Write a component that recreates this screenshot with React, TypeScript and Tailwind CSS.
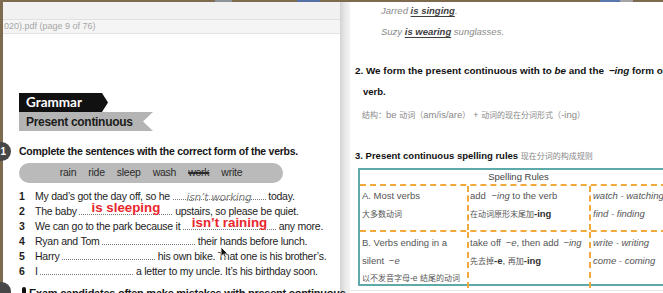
import type { ReactNode } from 'react';

const sans = "font-['Liberation_Sans',Arial,sans-serif]";
const cjk = "font-['Liberation_Sans','Noto_Sans_CJK_SC',sans-serif]";

type Tone = 'red' | 'pencil';

interface Sentence {
  n: number;
  before: string;
  answer?: string;
  tone?: Tone;
  after: string;
}

const sentences: Sentence[] = [
  { n: 1, before: 'My dad’s got the day off, so he', answer: 'isn’t working', tone: 'pencil', after: 'today.' },
  { n: 2, before: 'The baby', answer: 'is sleeping', tone: 'red', after: 'upstairs, so please be quiet.' },
  { n: 3, before: 'We can go to the park because it', answer: 'isn’t raining', tone: 'red', after: 'any more.' },
  { n: 4, before: 'Ryan and Tom', after: 'their hands before lunch.' },
  { n: 5, before: 'Harry', after: 'his own bike. That one is his brother’s.' },
  { n: 6, before: 'I', after: 'a letter to my uncle. It’s his birthday soon.' },
];

const verbs = ['rain', 'ride', 'sleep', 'wash', 'work', 'write'];

function Blank({ answer, tone }: { answer?: string; tone?: Tone }) {
  return (
    <span className="relative inline-block w-[93px] border-b border-dotted border-[#7a7a7a]">
      {answer && tone === 'red' && (
        <span className="absolute inset-x-0 bottom-0 text-center text-[13.3px] font-bold leading-none tracking-normal text-[#e8262b]">
          {answer}
        </span>
      )}
      {answer && tone === 'pencil' && (
        <span className="absolute inset-x-0 bottom-[-3px] text-center font-['DejaVu_Sans',sans-serif] text-[10.5px] font-light italic leading-none tracking-[-0.2px] text-[#7d7d7d]">
          {answer}
        </span>
      )}
    </span>
  );
}

function Zh({ children, className = '' }: { children: ReactNode; className?: string }) {
  return <span className={`${cjk} text-[8px] ${className}`}>{children}</span>;
}

function DesktopStrip() {
  return (
    <div className="flex h-[2px] w-full shrink-0">
      <div className="w-[215px] bg-[#7e6b4f]" />
      <div className="w-[17px] bg-[#8d939b]" />
      <div className="w-[65px] bg-[#7e6b4f]" />
      <div className="w-[23px] bg-[#5470a5]" />
      <div className="w-[280px] bg-[#7e6b4f]" />
      <div className="w-[20px] bg-[#5a78b0]" />
      <div className="w-[13px] bg-[#a3a3a3]" />
      <div className="flex-1 bg-[#7e6b4f]" />
    </div>
  );
}

function Cursor() {
  return (
    <svg className="absolute left-[217px] top-[212px]" width="9" height="13" viewBox="0 0 9 13">
      <path d="M1 1 L1 10.5 L3.3 8.4 L5 12 L6.4 11.4 L4.8 7.9 L7.9 7.9 Z" fill="#111" stroke="#fff" strokeWidth="0.8" />
    </svg>
  );
}

function PdfWindow() {
  return (
    <div className={`flex w-[337px] flex-col bg-white ${sans}`}>
      <div className="h-[18px] shrink-0 border-b border-[#e1e1e1] bg-[#f1f1f1]" />
      <div className="flex h-[14px] shrink-0 items-center border-b border-[#e4e4e4] bg-[#f5f5f5] pl-[1px] text-[9px] text-[#a6a6a6]">
        020).pdf (page 9 of 76)
      </div>

      <div className="relative flex-1 pl-[16px] pt-[59px]">
        {/* exercise badges, cut by the window edge */}
        <div className="absolute left-[-11px] top-[108px] flex h-[19px] w-[19px] items-center justify-end rounded-full bg-[#474747] pr-[5px] text-[10px] font-bold text-white">
          1
        </div>
        <div className="absolute left-[-11px] top-[248px] h-[19px] w-[19px] rounded-full bg-[#474747]" />

        <div className="flex h-[19px] w-[89px] items-center bg-[#111] pl-[7px] font-['Lato',sans-serif] text-[13.5px] font-bold text-white [clip-path:polygon(0_0,83px_0,89px_50%,83px_100%,0_100%)]">
          Grammar
        </div>
        <div className="flex h-[19px] w-[134px] items-center bg-[#b4b4b4] pl-[7px] text-[12px] font-bold tracking-[-0.3px] text-[#1c1c1c] [clip-path:polygon(0_0,100%_0,124px_50%,100%_100%,0_100%)]">
          Present continuous
        </div>

        <p className="mt-[13px] whitespace-nowrap text-[10.5px] font-bold leading-[15px] tracking-[-0.25px] text-[#161616]">
          Complete the sentences with the correct form of the verbs.
        </p>

        <div className="mt-[4px] flex h-[20px] w-[264px] items-center justify-center gap-[12px] rounded-full bg-[#bababa] text-[10.5px] tracking-[-0.25px] text-[#2b2b2b]">
          {verbs.map((v) => (
            <span key={v} className={v === 'work' ? 'line-through decoration-[1.5px]' : ''}>
              {v}
            </span>
          ))}
        </div>

        <div className="mt-[6px]">
          {sentences.map((s) => (
            <div key={s.n} className="flex h-[15px] items-baseline whitespace-nowrap text-[10.5px] leading-[15px] tracking-[-0.25px] text-[#1d1d1d]">
              <span className="w-[16px] font-bold">{s.n}</span>
              <span>
                {s.before} <Blank answer={s.answer} tone={s.tone} /> {s.after}
              </span>
            </div>
          ))}
        </div>

        <div className="mt-[7px] flex items-start">
          <div className="ml-[3px] mt-[1px] h-[15px] w-[15px] rounded-full border-2 border-[#111]" />
          <p className="ml-[3px] whitespace-nowrap text-[11px] font-bold leading-[15px] tracking-[-0.25px] text-[#161616]">
            Exam candidates often make mistakes with present continuous
          </p>
        </div>

        <Cursor />
      </div>
    </div>
  );
}

function SpellingTable() {
  return (
    <div className="ml-[8px] mt-[3px] w-[321px] border-2 border-[#5ea9aa] text-[9.5px] leading-[17.5px] text-[#555]">
      <div className="flex h-[16px] items-center justify-center border-b-2 border-dashed border-[#f2a93b] text-[#444]">
        Spelling Rules
      </div>
      <div className="grid h-[46px] grid-cols-[107px_122px_1fr] border-b-2 border-dashed border-[#f2a93b]">
        <div className="pl-[2px] pt-[1px]">
          <p>A. Most verbs</p>
          <p><Zh>大多数动词</Zh></p>
        </div>
        <div className="border-l-2 border-dashed border-[#f2a93b] pl-[1px] pt-[1px]">
          <p className="whitespace-nowrap">
            add <i className="ml-[3px]">−ing</i> to the verb
          </p>
          <p className="whitespace-nowrap">
            <Zh>在动词原形末尾加</Zh>
            <b className="text-[#333]">-ing</b>
          </p>
        </div>
        <div className="whitespace-nowrap border-l-2 border-dashed border-[#f2a93b] pl-[2px] pt-[1px] italic">
          <p>watch - watching</p>
          <p>find - finding</p>
        </div>
      </div>
      <div className="grid h-[52px] grid-cols-[107px_122px_1fr]">
        <div className="whitespace-nowrap pl-[2px] pt-[2px]">
          <p>B. Verbs ending in a</p>
          <p>
            silent <i className="ml-[2px]">−e</i>
          </p>
          <p>
            <Zh>以不发音字母</Zh>
            <span className="text-[8.5px]">-e </span>
            <Zh>结尾的动词</Zh>
          </p>
        </div>
        <div className="whitespace-nowrap border-l-2 border-dashed border-[#f2a93b] pl-[1px] pt-[2px]">
          <p>
            take off <i className="ml-[2px]">−e</i>, then add <i className="ml-[2px]">−ing</i>
          </p>
          <p>
            <Zh>先去掉</Zh>
            <b className="text-[#333]">-e</b>, <Zh>再加</Zh>
            <b className="text-[#333]">-ing</b>
          </p>
        </div>
        <div className="whitespace-nowrap border-l-2 border-dashed border-[#f2a93b] pl-[2px] pt-[2px] italic">
          <p>write - writing</p>
          <p>come - coming</p>
        </div>
      </div>
    </div>
  );
}

function NotesPage() {
  return (
    <div className={`relative flex-1 overflow-hidden bg-white text-[9.5px] ${sans}`}>
      <p className="whitespace-nowrap pl-[31px] leading-[17px] italic text-[#8a8a8a]">
        Jarred <span className="font-semibold text-[#3f3f3f] underline underline-offset-[1.5px]">is singing</span>.
      </p>
      <p className="mt-[4px] whitespace-nowrap pl-[31px] leading-[17px] italic text-[#8a8a8a]">
        Suzy <span className="font-semibold text-[#3f3f3f] underline underline-offset-[1.5px]">is wearing</span> sunglasses.
      </p>

      <p className="mt-[22px] whitespace-nowrap pl-[5px] text-[9.9px] font-bold leading-[17px] text-[#111]">
        2. We form the present continuous with to <i>be</i> and the <i className="ml-[2px]">−ing</i> form of the
      </p>
      <p className="mt-[4px] pl-[13px] font-bold leading-[17px] text-[#111]">verb.</p>

      <p className="mt-[6px] whitespace-nowrap pl-[12px] leading-[17px] text-[#888]">
        <Zh>结构：</Zh>be <Zh>动词（</Zh>am/is/are<Zh>）</Zh> + <Zh>动词的现在分词形式（</Zh>-ing<Zh>）</Zh>
      </p>

      <p className="mt-[23px] whitespace-nowrap pl-[5px] leading-[17px]">
        <span className="font-bold text-[#111]">3. Present continuous spelling rules</span>{' '}
        <Zh className="text-[#888]">现在分词的构成规则</Zh>
      </p>

      <SpellingTable />
      <div className="mt-[4px] h-px w-full bg-[#e8e8e8]" />
    </div>
  );
}

export default function App() {
  return (
    <div className="flex h-[293px] w-[663px] flex-col overflow-hidden bg-[#7e6b4f]">
      <DesktopStrip />
      <div className="flex min-h-0 flex-1">
        <div className="w-[3px] shrink-0 bg-[#7e6b4f]" />
        <PdfWindow />
        <div className="w-[10px] shrink-0 bg-gradient-to-r from-[#d3d3d3] via-[#e8e8e8] to-[#f3f3f3]" />
        <NotesPage />
      </div>
    </div>
  );
}
